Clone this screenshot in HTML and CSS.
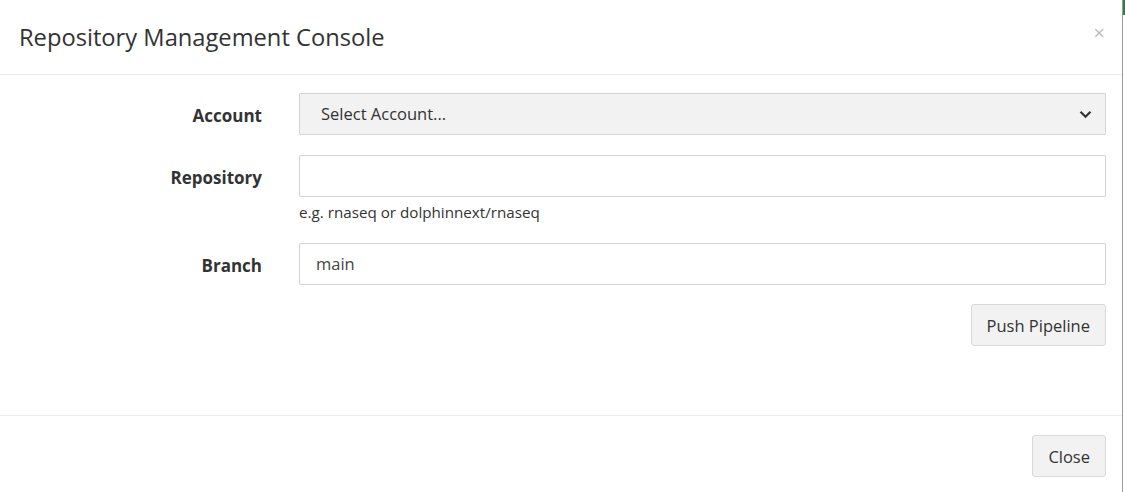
FILE: index.html
```html
<!DOCTYPE html>
<html>
<head>
<meta charset="utf-8">
<link rel="stylesheet" href="styles.css">
</head>
<body>
<div class="page">
  <div class="modal">
    <div class="modal-header">
      <h4 class="modal-title">Repository Management Console</h4>
      <span class="close">×</span>
    </div>
    <div class="modal-body">
      <div class="form-row">
        <label class="form-label">Account</label>
        <div class="form-field">
          <div class="select">
            <span>Select Account...</span>
            <svg class="chev" width="13" height="9" viewBox="0 0 13 9"><path d="M1.5 1.8 L6.5 6.8 L11.5 1.8" fill="none" stroke="#333" stroke-width="2.2"/></svg>
          </div>
        </div>
      </div>
      <div class="form-row form-row-help">
        <label class="form-label">Repository</label>
        <div class="form-field">
          <div class="input"></div>
          <div class="help">e.g. rnaseq or dolphinnext/rnaseq</div>
        </div>
      </div>
      <div class="form-row form-row-last">
        <label class="form-label">Branch</label>
        <div class="form-field">
          <div class="input">main</div>
        </div>
      </div>
      <div class="actions">
        <button class="btn">Push Pipeline</button>
      </div>
    </div>
    <div class="modal-footer">
      <button class="btn">Close</button>
    </div>
  </div>
  <div class="edge"></div>
</div>
</body>
</html>
```
FILE: styles.css
```css
* { box-sizing: border-box; }
html, body { margin: 0; padding: 0; background: #fff; }
body {
  font-family: "Open Sans", "Noto Sans", sans-serif;
  color: #333;
  width: 1125px;
  height: 492px;
  overflow: hidden;
}
.page { display: flex; height: 492px; }
.modal {
  width: 1123px;
  border-right: 1px solid #9a9a9a;
  display: flex;
  flex-direction: column;
}
.edge {
  width: 2px;
  background: linear-gradient(to bottom, #2e7d46 0, #2e7d46 15px, #fff 15px);
}
.modal-header {
  position: relative;
  height: 75px;
  border-bottom: 1px solid #ececec;
  padding: 20px 19px 0;
}
.modal-title {
  margin: 0;
  font-weight: 400;
  font-size: 23.7px;
  line-height: 34px;
  color: #333;
}
.close {
  position: absolute;
  right: 17px;
  top: 21px;
  font-size: 20px;
  line-height: 24px;
  color: #bdbdbd;
}
.modal-body {
  padding: 18px 0 0 0;
  height: 341px;
  border-bottom: 1px solid #ececec;
}
.form-row {
  display: grid;
  grid-template-columns: 262px 807px;
  column-gap: 37px;
  margin-bottom: 20px;
}
.form-row-help { margin-bottom: 21px; }
.form-row-last { margin-bottom: 19px; }
.form-label {
  text-align: right;
  font-weight: 700;
  font-size: 17px;
  line-height: 42px;
  height: 42px;
  padding-top: 2px;
}
.select, .input {
  height: 42px;
  border: 1px solid #d4d4d8;
  border-radius: 1px;
  font-size: 16.5px;
  line-height: 40px;
}
.select {
  background: #f2f2f2;
  padding: 0 5px 0 21px;
  display: flex;
  justify-content: space-between;
  align-items: center;
  color: #333;
}
.chev { margin-right: 8px; }
.input {
  background: #fff;
  padding: 0 16px;
  color: #444;
}
.help {
  margin-top: 5px;
  font-size: 15.2px;
  line-height: 20px;
  color: #333;
}
.actions {
  display: flex;
  justify-content: flex-end;
  padding-right: 16px;
}
.btn {
  font-family: inherit;
  font-size: 16.5px;
  color: #333;
  background: #f2f2f2;
  border: 1px solid #d9d9d9;
  border-radius: 3px;
  height: 42px;
  padding: 0 15px;
  cursor: pointer;
}
.modal-footer {
  display: flex;
  justify-content: flex-end;
  padding: 19px 16px 0 0;
}
```
